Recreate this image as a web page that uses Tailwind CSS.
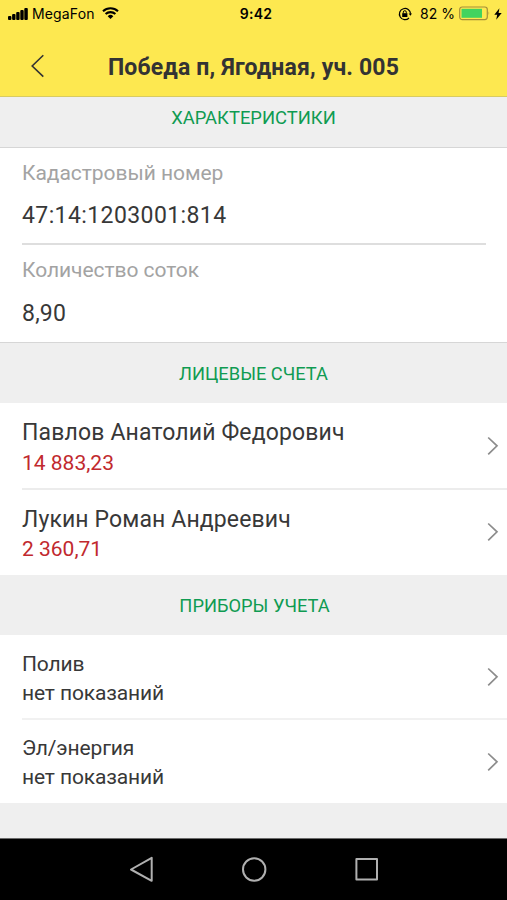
<!DOCTYPE html>
<html lang="ru">
<head>
  <meta charset="UTF-8">
  <meta name="viewport" content="width=device-width, initial-scale=1.0">
  <title>Победа п, Ягодная, уч. 005</title>
  <script src="https://cdn.jsdelivr.net/npm/@tailwindcss/browser@4"></script>
</head>
<body class="bg-[#efefef] font-[Roboto,sans-serif] text-[#383838] overflow-hidden">
  <div class="w-[507px] h-[900px] flex flex-col overflow-hidden">

    <!-- Header -->
    <header class="h-[97px] shrink-0 bg-[#fde850] border-b border-[#d8cb62]">
      <div class="h-[27px] grid grid-cols-3 items-center text-black font-[Inter,sans-serif] text-[14px]">
        <div class="flex items-center pl-2">
          <svg class="w-5 h-3" viewBox="0 0 20 12" fill="black">
            <rect x="0" y="8" width="3.4" height="4" rx="1" />
            <rect x="4.1" y="6" width="3.4" height="6" rx="1" />
            <rect x="8.2" y="4" width="3.4" height="8" rx="1" />
            <rect x="12.3" y="2" width="3.4" height="10" rx="1" />
            <rect x="16.3" y="0" width="3.5" height="12" rx="1" />
          </svg>
          <span class="ml-1 tracking-[0.15px]">MegaFon</span>
          <svg class="ml-[7px] mb-[2px] w-[17px] h-3" viewBox="0 0 17 12" fill="none" stroke="black" stroke-width="2.1">
            <path d="M1 4.2a11 11 0 0 1 15 0" />
            <path d="M3.6 7a7.2 7.2 0 0 1 9.8 0" />
            <path d="M8.5 12L5.7 9.2a4 4 0 0 1 5.6 0z" fill="black" stroke="none" />
          </svg>
        </div>
        <span class="text-center font-semibold tracking-[0.3px] pl-[5px]">9:42</span>
        <div class="flex items-center justify-end pr-[5px]">
          <svg class="w-[14px] h-[14px]" viewBox="0 0 14 14" fill="none" stroke="black">
            <path d="M11 11a5.6 5.6 0 1 1 1.6-4.2" stroke-width="1.2" />
            <path d="M10.7 6.4h3.3l-1.6 2.4z" fill="black" stroke="none" />
            <rect x="4.2" y="6.2" width="5.2" height="3.8" fill="black" stroke="none" />
            <path d="M5.3 6.4V5.2a1.5 1.5 0 0 1 3 0v1.2" stroke-width="1" />
          </svg>
          <span class="ml-2 whitespace-nowrap">82 %</span>
          <svg class="ml-1 w-8 h-[15px]" viewBox="0 0 32 15" fill="none">
            <rect x="0.7" y="1" width="27.6" height="12.6" rx="2.5" stroke="#a58d38" stroke-width="1.2" />
            <rect x="2.5" y="2.8" width="20.5" height="9" fill="#42d35f" />
            <path d="M29.6 5.2q1.4 2 0 4.2z" fill="#a58d38" />
          </svg>
          <svg class="ml-[3px] w-2 h-3" viewBox="0 0 8 12" fill="black">
            <path d="M5.4 0.3L0.3 6.8h2.9L2.2 11.7 7.7 5H4.6z" />
          </svg>
        </div>
      </div>
      <div class="h-[69px] flex">
        <a href="#" class="w-[60px] pt-[27px] pl-[31px]">
          <svg class="w-[14px] h-[24px]" viewBox="0 0 14 24" fill="none" stroke="#333333" stroke-width="1.6">
            <path d="M12.3 1.2L1.2 12l11.1 10.6" />
          </svg>
        </a>
        <h1 class="flex-1 pr-[60px] leading-[81px] text-center text-[23px] text-[#333333] font-bold tracking-[0.15px] whitespace-nowrap">Победа п, Ягодная, уч. 005</h1>
      </div>
    </header>

    <main class="h-[741px] shrink-0">
      <!-- Characteristics -->
      <h2 class="h-[51px] leading-[42px] border-b border-[#d6d6d6] text-center text-[18.4px] text-[#0f9b52]">ХАРАКТЕРИСТИКИ</h2>
      <div class="h-[194px] bg-white pl-[22px] pr-[21px]">
        <div class="h-[97px] border-b-2 border-[#dedede]">
          <div class="h-[50px] leading-[50px] text-[21px] tracking-[-0.05px] text-[#a3a3a3]">Кадастровый номер</div>
          <div class="leading-[35px] text-[23px] tracking-[0.4px]">47:14:1203001:814</div>
        </div>
        <div>
          <div class="h-[51px] leading-[50px] text-[21px] tracking-[-0.05px] text-[#a3a3a3]">Количество соток</div>
          <div class="leading-[35px] text-[23px] tracking-[0.2px]">8,90</div>
        </div>
      </div>

      <!-- Accounts -->
      <h2 class="h-[61px] leading-[61px] border-t border-[#d6d6d6] text-center text-[18.3px] text-[#0f9b52]">ЛИЦЕВЫЕ СЧЕТА</h2>
      <div class="h-[172px] bg-white pl-[22px]">
        <a href="#" class="h-[87px] flex justify-between border-b-2 border-[#ececec]">
          <div class="pt-[15px]">
            <div class="leading-[30px] text-[23px] tracking-[0.15px]">Павлов Анатолий Федорович</div>
            <div class="leading-[30px] text-[21px] text-[#c1292e]">14 883,23</div>
          </div>
          <svg class="mt-[33px] mr-2 w-3 h-5" viewBox="0 0 12 20" fill="none" stroke="#8c8c8c" stroke-width="1.7">
            <path d="M1.2 1.5l8.8 8.3-8.8 8.5" />
          </svg>
        </a>
        <a href="#" class="h-[85px] flex justify-between">
          <div class="pt-[14px]">
            <div class="leading-[31px] text-[23px] tracking-[0.12px]">Лукин Роман Андреевич</div>
            <div class="leading-[29px] text-[21px] text-[#c1292e]">2 360,71</div>
          </div>
          <svg class="mt-[32px] mr-2 w-3 h-5" viewBox="0 0 12 20" fill="none" stroke="#8c8c8c" stroke-width="1.7">
            <path d="M1.2 1.5l8.8 8.3-8.8 8.5" />
          </svg>
        </a>
      </div>

      <!-- Meters -->
      <h2 class="h-[60px] leading-[61px] pl-[2px] text-center text-[18.3px] text-[#0f9b52]">ПРИБОРЫ УЧЕТА</h2>
      <div class="h-[168px] bg-white pl-[22px]">
        <a href="#" class="h-[85px] flex justify-between border-b-2 border-[#f1f1f1]">
          <div class="pt-[15px] text-[21px] leading-[29px] tracking-[-0.13px]">
            <div>Полив</div>
            <div>нет показаний</div>
          </div>
          <svg class="mt-[32px] mr-2 w-3 h-5" viewBox="0 0 12 20" fill="none" stroke="#8c8c8c" stroke-width="1.7">
            <path d="M1.2 1.5l8.8 8.3-8.8 8.5" />
          </svg>
        </a>
        <a href="#" class="h-[83px] flex justify-between">
          <div class="pt-[14px] text-[21px] leading-[29px] tracking-[-0.13px]">
            <div>Эл/энергия</div>
            <div>нет показаний</div>
          </div>
          <svg class="mt-[32px] mr-2 w-3 h-5" viewBox="0 0 12 20" fill="none" stroke="#8c8c8c" stroke-width="1.7">
            <path d="M1.2 1.5l8.8 8.3-8.8 8.5" />
          </svg>
        </a>
      </div>
    </main>

    <!-- Navigation bar -->
    <nav class="h-[62px] shrink-0 bg-black border-t border-[#6b6b6b]">
      <svg class="w-[507px] h-[61px]" viewBox="0 0 507 61" fill="none" stroke="#b0b0b0" stroke-width="2" stroke-linejoin="round">
        <path d="M151.7 18.8v23L131 30.5z" />
        <circle cx="254.2" cy="30.5" r="11.2" />
        <rect x="356.4" y="20" width="20.6" height="20.6" />
      </svg>
    </nav>

  </div>
</body>
</html>
